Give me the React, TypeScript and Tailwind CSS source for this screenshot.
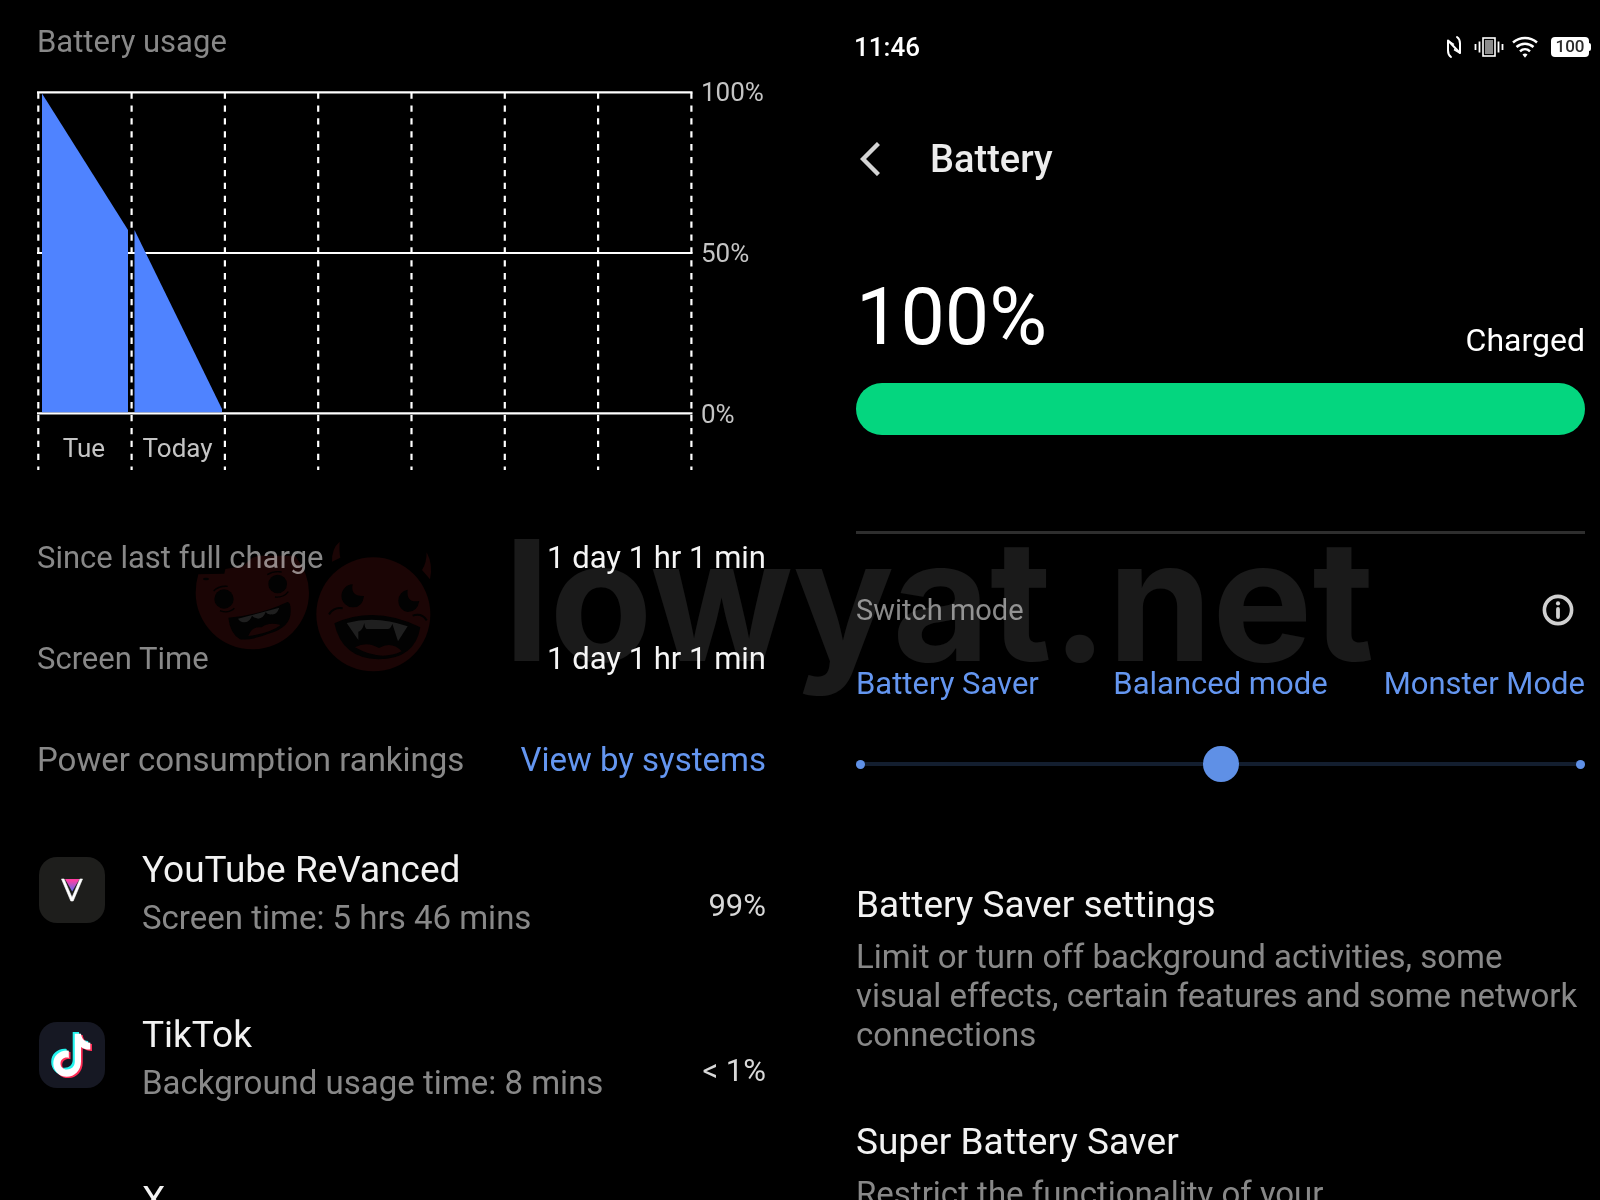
import type { ReactNode } from "react";

interface RankingItem {
  readonly name: string;
  readonly detail: string;
  readonly percent: string;
  readonly icon: ReactNode;
}

interface StatRow {
  readonly label: string;
  readonly value: string;
}

const STATS: StatRow[] = [
  { label: "Since last full charge", value: "1 day 1 hr 1 min" },
  { label: "Screen Time", value: "1 day 1 hr 1 min" },
];

const MODES = ["Battery Saver", "Balanced mode", "Monster Mode"];

function VancedIcon() {
  return (
    <svg viewBox="0 0 68 66" className="h-[66px] w-[68px]" aria-hidden="true">
      <defs>
        <linearGradient id="vanced" x1="0" y1="0" x2="0" y2="1">
          <stop offset="0.1" stopColor="#ff3fa4" />
          <stop offset="1" stopColor="#5b6bf0" />
        </linearGradient>
      </defs>
      <rect x="2" width="66" height="66" rx="18" fill="#1e1e1c" />
      <path d="M28 22h14.5L35.2 34.5z" fill="url(#vanced)" />
      <path
        d="M24.5 22l9.3 22h2.4l9.3-22h-2.6L35 40.5 27.100 22z"
        fill="#fff"
        stroke="#fff"
        strokeWidth="0.6"
        strokeLinejoin="round"
      />
    </svg>
  );
}

const NOTE =
  "M34.5 11h6.2c.6 5 3.9 8.5 9.3 9v6.8c-3.5.2-6.5-.9-9.3-2.7v14.6c0 9-6.5 15.3-14.2 15.3-8 0-13.5-6-13.5-13.2 0-8.2 7-14 15.5-12.9v7.2c-4.4-1.2-8.300 1.5-8.300 5.6 0 3.6 2.9 6 6.300 6 4.5 0 8-2.7 8-8z";

function TikTokIcon() {
  return (
    <svg viewBox="0 0 68 66" className="h-[66px] w-[68px]" aria-hidden="true">
      <rect x="2" width="66" height="66" rx="18" fill="#161823" />
      <g transform="translate(2.5 .5)">
        <path d={NOTE} fill="#25f4ee" transform="translate(-1.3 -1.4)" />
        <path d={NOTE} fill="#fe2c55" transform="translate(2.5 1.6)" />
        <path d={NOTE} fill="#fff" transform="translate(.8 .3)" />
      </g>
    </svg>
  );
}

const RANKING: RankingItem[] = [
  {
    name: "YouTube ReVanced",
    detail: "Screen time: 5 hrs 46 mins",
    percent: "99%",
    icon: <VancedIcon />,
  },
  {
    name: "TikTok",
    detail: "Background usage time: 8 mins",
    percent: "< 1%",
    icon: <TikTokIcon />,
  },
  { name: "X", detail: "", percent: "", icon: null },
];

function UsageChart() {
  const columns = [0, 1, 2, 3, 4, 5, 6, 7];

  return (
    <div className="mt-[14px] flex text-[26px] leading-8 text-[#c4c4c4]">
      <div className="relative flex-1">
        <svg
          viewBox="0 0 656 396"
          preserveAspectRatio="none"
          className="h-[396px] w-full"
          role="img"
          aria-label="Battery usage"
        >
          <g stroke="#fff" strokeWidth="2.2">
            <path d="M0 16.3H655.5M0 177H655.5M0 337.4H655.5" />
            {columns.map((c) => (
              <path
                key={c}
                d={`M${1.3 + c * 93.3} 16.5V394`}
                strokeDasharray="6.3 6.6"
              />
            ))}
          </g>
          <g fill="#4f83ff">
            <path d="M5 17.5L91 154V336.3H5z" />
            <path d="M97.5 154L185 333V336.3H97.5z" />
          </g>
        </svg>
        {/* day labels sit under the 0% line, one per column */}
        <div className="absolute inset-x-0 bottom-2 grid grid-cols-7 text-center">
          <span>Tue</span>
          <span>Today</span>
        </div>
      </div>
      <div className="flex h-[354px] w-[73px] flex-col justify-between pl-2">
        <span>100%</span>
        <span>50%</span>
        <span>0%</span>
      </div>
    </div>
  );
}

function UsagePanel() {
  return (
    <section className="pt-[22px] pr-[34px] pl-[37px]">
      <h2 className="text-[31px] leading-10 text-[#888888]">Battery usage</h2>
      <UsageChart />

      <dl className="mt-9 text-[31px]">
        {STATS.map((stat) => (
          <div
            key={stat.label}
            className="flex h-[101px] items-center justify-between"
          >
            <dt className="text-[#888888]">{stat.label}</dt>
            <dd className="text-[#f5f5f5]">{stat.value}</dd>
          </div>
        ))}
      </dl>

      <div className="flex h-[100px] items-center justify-between text-[33px]">
        <h3 className="text-[#888888]">Power consumption rankings</h3>
        <a href="#systems" className="text-[#6496f0]">
          View by systems
        </a>
      </div>

      <ul>
        {RANKING.map((item) => (
          <li key={item.name} className="flex h-[165px] pt-9">
            <div className="mt-[11px] w-[68px]">{item.icon}</div>
            <div className="ml-[37px] flex-1 leading-[48px]">
              <p className="text-[37px] text-[#f2f2f2]">{item.name}</p>
              <p className="text-[33px] text-[#888888]">{item.detail}</p>
            </div>
            <span className="mt-9 text-[31px] leading-[48px] text-[#d8d8d8]">
              {item.percent}
            </span>
          </li>
        ))}
      </ul>
    </section>
  );
}

function StatusBar() {
  return (
    <div className="-mr-1.5 -ml-0.5 flex h-10 items-center justify-between text-white">
      <span className="text-[26px] font-medium">11:46</span>
      <div className="flex items-center" aria-hidden="true">
        {/* NFC */}
        <svg viewBox="0 0 16 24" className="h-6 w-4" fill="none">
          <path
            d="M5 22C2.8 20.500 2 19 2 15.500V5.500L14 18V8.500C14 5 13.200 3.500 11 2"
            stroke="#fff"
            strokeWidth="2"
            strokeLinecap="round"
            strokeLinejoin="round"
          />
          <path d="M2 5.500L8 9.500M14 18L8 14.500" stroke="#fff" strokeWidth="1.500" />
        </svg>
        {/* vibrate */}
        <svg viewBox="0 0 30 20" className="ml-3 h-5 w-[30px]">
          <rect x="9" y="1" width="12" height="18" fill="none" stroke="#fff" strokeWidth="1.6" />
          <rect x="11" y="3" width="8" height="14" fill="#8c8c8c" />
          <path
            d="M1.5 7v6M5.5 4.5v11M24.5 4.5v11M28.5 7v6"
            stroke="#fff"
            strokeWidth="1.8"
          />
        </svg>
        {/* wifi */}
        <svg viewBox="0 0 26 22" className="ml-2 h-[22px] w-[26px]" fill="none">
          <g stroke="#fff" strokeWidth="2.5">
            <path d="M1 6.5c7-6 17-6 24 0" />
            <path d="M4.5 11c5-4.5 12-4.5 17 0" />
            <path d="M8 15.3c3-2.8 7-2.8 10 0" />
          </g>
          <path d="M10.500 18.500c1.600-1.400 3.400-1.400 5 0L13 21.800z" fill="#fff" />
        </svg>
        <div className="ml-[13px] flex items-center">
          <span className="flex h-5 w-[38px] items-center justify-center rounded-[4px] bg-white text-[17px] font-medium text-[#2a2a2a]">
            100
          </span>
          <span className="h-2 w-[2px] rounded-r bg-white" />
        </div>
      </div>
    </div>
  );
}

function ModeSlider() {
  return (
    <div>
      <label
        htmlFor="mode"
        className="grid grid-cols-3 text-[31px] leading-10 whitespace-nowrap text-[#6496f0]"
      >
        {MODES.map((mode) => (
          <span key={mode} className="text-center first:text-left last:text-right">
            {mode}
          </span>
        ))}
      </label>
      <div className="relative mt-10 flex h-10 items-center">
        <input
          id="mode"
          type="range"
          min={0}
          max={2}
          defaultValue={1}
          className="w-full appearance-none bg-transparent [&::-webkit-slider-runnable-track]:h-1 [&::-webkit-slider-runnable-track]:bg-[#131e2f] [&::-webkit-slider-thumb]:-mt-4 [&::-webkit-slider-thumb]:size-9 [&::-webkit-slider-thumb]:appearance-none [&::-webkit-slider-thumb]:rounded-full [&::-webkit-slider-thumb]:bg-[#5f90e6]"
        />
        <span className="absolute left-0 size-[9px] rounded-full bg-[#5f90e6]" />
        <span className="absolute right-0 size-[9px] rounded-full bg-[#5f90e6]" />
      </div>
    </div>
  );
}

function BatteryPanel() {
  return (
    <section className="pt-[27px] pr-[15px] pl-14">
      <StatusBar />

      <header className="mt-16 flex h-14 items-center">
        <button type="button" aria-label="Back" className="w-[74px] pl-1">
          <svg viewBox="0 0 20 34" className="h-[34px] w-5" fill="none">
            <path d="M18.5 1.5L3 17l15.5 15.5" stroke="#d4d4d4" strokeWidth="4.4" />
          </svg>
        </button>
        <h1 className="text-[38px] font-medium text-[#ececec]">Battery</h1>
      </header>

      <div className="mt-[82px] flex h-24 items-start justify-between text-white">
        <p className="text-[79px] leading-[96px]">100%</p>
        <p className="mt-[51px] text-[32px] leading-10">Charged</p>
      </div>
      <div className="mt-[18px] h-[52px] rounded-full bg-[#04d67f]" />
      <hr className="mt-24 border-t-[3px] border-[#2e2e2e]" />

      <div className="mt-14 flex h-10 items-center justify-between pr-[11px]">
        <h2 className="text-[29px] leading-10 text-[#888888]">Switch mode</h2>
        <button type="button" aria-label="About modes">
          <svg viewBox="0 0 32 32" className="size-8" fill="none">
            <circle cx="16" cy="16" r="13.6" stroke="#d0d0d0" strokeWidth="3.6" />
            <circle cx="16" cy="9.4" r="2.100" fill="#d0d0d0" />
            <path d="M16 15v8" stroke="#d0d0d0" strokeWidth="3.8" strokeLinecap="round" />
          </svg>
        </button>
      </div>

      <div className="mt-[34px]">
        <ModeSlider />
      </div>

      <article className="mt-[97px]">
        <h3 className="text-[37px] leading-[48px] text-[#f2f2f2]">
          Battery Saver settings
        </h3>
        <p className="mt-2 text-[33px] leading-[39px] text-[#888888]">
          Limit or turn off background activities, some visual effects, certain
          features and some network connections
        </p>
      </article>

      <article className="mt-16">
        <h3 className="text-[37px] leading-[48px] text-[#f2f2f2]">
          Super Battery Saver
        </h3>
        <p className="mt-2 text-[33px] leading-[39px] text-[#888888]">
          Restrict the functionality of your
        </p>
      </article>
    </section>
  );
}

function Mascots() {
  return (
    <svg viewBox="0 0 840 510" className="h-[170px] w-[280px]">
      {/* zombie */}
      <path
        d="M55 163L133 161L136 147L190 138L215 115L235 107H345Q387 160 387 218A170 170 0 0 1 47 218Q47 190 55 163Z"
        fill="#1b0505"
      />
      <g fill="#020202">
        <ellipse cx="78" cy="177" rx="9" ry="4" />
        <circle cx="132" cy="237" r="29" />
        <circle cx="293" cy="192" r="28" />
        <path d="M145 293Q240 285 322 246Q332 246 332 270Q335 320 270 340Q215 362 180 358Q150 340 145 293Z" />
      </g>
      <path
        d="M174 296L298 263Q290 285 275 283Q262 285 257 276Q250 295 235 296Q222 294 216 287Q210 305 195 307Q180 307 174 296Z"
        fill="#1f1f1f"
      />
      <path d="M205 348Q215 318 245 322Q265 305 302 315Q270 340 205 348Z" fill="#1b0505" />
      <path
        d="M101 213Q115 197 143 199M262 164Q280 152 305 156M120 272Q145 282 163 265M285 231Q310 234 325 215"
        stroke="#020202"
        strokeWidth="4"
        fill="none"
      />

      {/* devil */}
      <g fill="#1b0505">
        <path d="M456 125Q455 85 479 65Q477 95 481 113Z" />
        <path d="M740 97Q760 135 750 178L726 150Q740 130 740 97Z" />
        <circle cx="580" cy="283" r="171" />
      </g>
      <g fill="#020202">
        <path d="M518 193Q510 230 552 228Q548 262 520 262A34 34 0 0 1 518 193Z" />
        <path d="M683 209Q678 250 718 243Q712 276 683 276A34 34 0 0 1 683 209Z" />
        <path d="M463 310Q585 255 721 322Q705 418 595 418Q485 415 463 310Z" />
      </g>
      <path
        d="M500 309Q590 285 683 319L654 364L637 311Q632 328 622 327H562Q555 328 553 309Q546 335 535 335V360Z"
        fill="#1f1f1f"
      />
      <path d="M525 382Q560 362 597 384Q635 362 665 394Q600 425 525 382Z" fill="#1b0505" />
      <path
        d="M447 283Q462 260 488 265M698 287Q725 278 740 301"
        stroke="#020202"
        strokeWidth="6"
        fill="none"
      />
    </svg>
  );
}

function Watermark() {
  return (
    <div
      aria-hidden="true"
      className="pointer-events-none absolute top-[520px] left-[180px] flex items-start mix-blend-screen"
    >
      <Mascots />
      <span className="ml-11 font-['Inter',sans-serif] text-[168px] leading-[160px] font-bold text-white/10">
        lowyat.net
      </span>
    </div>
  );
}

export default function App() {
  return (
    <main className="relative grid h-screen grid-cols-2 overflow-hidden bg-black font-['Roboto',sans-serif]">
      <UsagePanel />
      <BatteryPanel />
      <Watermark />
    </main>
  );
}
